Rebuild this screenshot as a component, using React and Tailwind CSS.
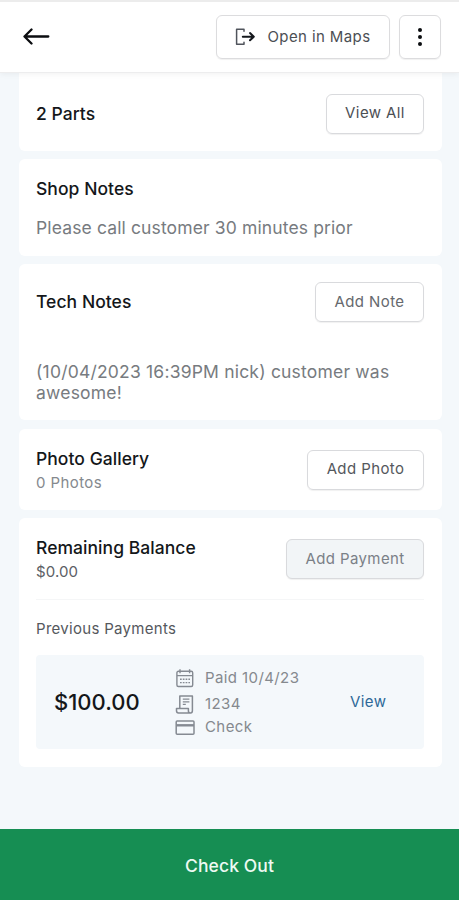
import React from 'react';

const payments = [{ id: 1, amount: '$100.00', date: 'Paid 10/4/23', number: '1234', method: 'Check' }];

const BackIcon = () => (
  <svg className="h-[18px] w-7" viewBox="0 0 28 18" fill="none" stroke="#0b0d10" strokeWidth="2.3" strokeLinecap="round" strokeLinejoin="round">
    <path d="M26.3 8.5H2.6M9.5 1.5 2.5 8.5l7 7" />
  </svg>
);

const ExitIcon = () => (
  <svg className="h-[18px] w-5" viewBox="0 0 20 18" fill="none" strokeLinecap="round" strokeLinejoin="round">
    <path d="M9 3.2V1.2H1.6v15H9v-2" stroke="#50545c" strokeWidth="1.5" />
    <path d="M7.8 8.7h11M15 5.1l3.8 3.6-3.8 3.6" stroke="#15181d" strokeWidth="2" />
  </svg>
);

const CalendarIcon = () => (
  <svg className="h-[19px] w-[19px]" viewBox="0 0 19 19" fill="none" stroke="#858a92" strokeWidth="1.4">
    <rect x="1.9" y="2.3" width="15.8" height="15.2" rx="1.5" />
    <path d="M1.9 6.6h15.8M5 .3v4M14.6.3v4" />
    <path d="M5 10.2h10M5 13.6h10" strokeDasharray="1.7 1.1" />
  </svg>
);

const ReceiptIcon = () => (
  <svg className="h-[19px] w-[19px]" viewBox="0 0 19 19" fill="none" stroke="#858a92" strokeWidth="1.5" strokeLinejoin="round">
    <path d="M4.8 13.4V.9h12.6v14.9c0 1.4-.7 2.2-1.8 2.2H3.5c-1.2 0-2-.8-2-2.2v-2.4h11.9v2.5c0 1.3.8 2.1 2.2 2.1" />
    <path d="M7.8 4.2h6.6M7.8 6.8h6.6M7.8 9.4h3" strokeWidth="1.2" />
  </svg>
);

const CardIcon = () => (
  <svg className="h-4 w-5" viewBox="0 0 20 16" fill="none" stroke="#858a92" strokeWidth="1.5">
    <rect x="1.2" y="1" width="17.8" height="13.2" rx="1" />
    <path d="M1.2 5.3H19" strokeWidth="2.4" />
  </svg>
);

const Button = ({ children, className = '' }) => (
  <button
    className={`flex h-10 shrink-0 items-center justify-center rounded-md border border-[#d9dadd] text-[15px] tracking-[0.4px] shadow-[0_1px_1px_rgba(0,0,0,0.06)] ${className}`}
  >
    {children}
  </button>
);

const Title = ({ children }) => (
  <h2 className="text-[17.5px] leading-6 font-medium tracking-[0.05px] text-[#14171a]">{children}</h2>
);

const App = () => {
  return (
    <div className="flex h-[900px] w-[459px] flex-col overflow-hidden bg-[#f4f8fb] font-['Inter',sans-serif]">
      {/* Top bar */}
      <header className="z-10 flex h-[73px] shrink-0 items-center justify-between border-t-2 border-b border-t-[#ececec] border-b-[#ededee] bg-white pr-[18px] pl-[22px] shadow-[0_1px_6px_rgba(0,0,0,0.06)]">
        <button aria-label="Back">
          <BackIcon />
        </button>
        <div className="flex gap-[9px]">
          <button className="flex h-11 w-[174px] items-center justify-center gap-3 rounded-md border border-[#dcdcde] text-[15px] tracking-[0.4px] text-[#4c4f54] shadow-[0_1px_1px_rgba(0,0,0,0.06)]">
            <ExitIcon />
            Open in Maps
          </button>
          <button aria-label="More" className="flex h-11 w-[42px] flex-col items-center justify-center gap-[3px] rounded-md border border-[#dcdcde] shadow-[0_1px_1px_rgba(0,0,0,0.06)]">
            <span className="h-1 w-1 rounded-full bg-[#0b0d10]" />
            <span className="h-1 w-1 rounded-full bg-[#0b0d10]" />
            <span className="h-1 w-1 rounded-full bg-[#0b0d10]" />
          </button>
        </div>
      </header>

      <main className="flex flex-1 flex-col gap-2 pr-[17px] pl-[19px]">
        <section className="flex h-[78px] items-center justify-between rounded-b-md bg-white pt-[3px] pr-[18px] pl-[17px]">
          <Title>2 Parts</Title>
          <Button className="w-[98px] text-[#4c4f54]">View All</Button>
        </section>

        <section className="h-[97px] rounded-md bg-white pt-[18px] pr-[18px] pl-[17px]">
          <Title>Shop Notes</Title>
          <p className="mt-4 text-[17.5px] leading-[21px] tracking-[0.13px] text-[#777b80]">Please call customer 30 minutes prior</p>
        </section>

        <section className="h-[156px] rounded-md bg-white pt-[18px] pr-[18px] pl-[17px]">
          <div className="flex items-center justify-between">
            <Title>Tech Notes</Title>
            <Button className="w-[109px] text-[#66696e]">Add Note</Button>
          </div>
          <p className="mt-[39px] text-[17.5px] leading-[21px] tracking-[0.2px] text-[#777b80]">
            (10/04/2023 16:39PM nick) customer was awesome!
          </p>
        </section>

        <section className="mt-px flex h-[81px] items-center justify-between rounded-md bg-white pr-[18px] pl-[17px]">
          <div className="pt-0.5">
            <Title>Photo Gallery</Title>
            <p className="text-[15px] leading-6 tracking-[0.4px] text-[#85898e]">0 Photos</p>
          </div>
          <Button className="w-[117px] text-[#55585d]">Add Photo</Button>
        </section>

        <section className="h-[249px] rounded-md bg-white pt-[18px] pr-[18px] pl-[17px]">
          <div className="flex items-center justify-between">
            <div>
              <Title>Remaining Balance</Title>
              <p className="text-[15px] leading-6 tracking-[0.1px] text-[#5c6065]">$0.00</p>
            </div>
            <Button className="mb-0.5 w-[138px] bg-[#f2f5f7] text-[#7b8087]">Add Payment</Button>
          </div>
          <h3 className="mt-[15px] border-t border-[#f5f6f7] pt-[17px] text-[15px] leading-6 tracking-[0.3px] text-[#55585d]">
            Previous Payments
          </h3>
          {payments.map((payment) => (
            <div key={payment.id} className="mt-[14px] flex h-[94px] items-center rounded bg-[#f4f8fb] pl-[18px]">
              <span className="w-[121px] text-[22px] font-medium text-[#14171a]">{payment.amount}</span>
              <div className="flex w-[175px] flex-col pb-0.5 text-[15px] tracking-[0.4px] text-[#85898e]">
                <div className="flex h-[27px] items-center gap-[11px]">
                  <CalendarIcon />
                  {payment.date}
                </div>
                <div className="flex h-[26px] items-center gap-[11px]">
                  <ReceiptIcon />
                  {payment.number}
                </div>
                <div className="flex h-5 items-center gap-2.5">
                  <CardIcon />
                  {payment.method}
                </div>
              </div>
              <a href="#" className="text-[15px] tracking-[0.4px] text-[#2d6898]">View</a>
            </div>
          ))}
        </section>
      </main>

      <button className="h-[71px] shrink-0 bg-[#168e53] pt-1 text-[17.5px] font-medium tracking-[0.1px] text-[#eefaf3]">Check Out</button>
    </div>
  );
};

export default App;
